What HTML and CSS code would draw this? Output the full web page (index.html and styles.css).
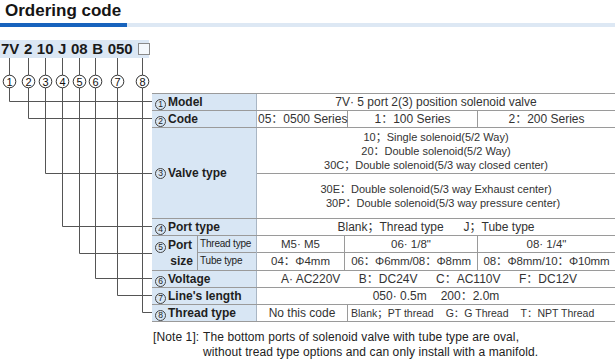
FILE: index.html
```html
<!DOCTYPE html>
<html>
<head>
<meta charset="utf-8">
<link rel="stylesheet" href="styles.css">
</head>
<body>
<div class="page">
  <h1 class="title">Ordering code</h1>
  <div class="rule"><span class="rule-dark"></span><span class="rule-light"></span></div>
  <div class="code">7V 2 10 J 08 B 050<span class="box"></span></div>

  <svg class="links" width="160" height="330" viewBox="0 0 160 330">
    <g fill="none" stroke="#555" stroke-width="1">
      <path d="M9.5 58V75M9.5 88V101.5H152"/>
      <path d="M28.5 58V75M28.5 88V118.5H152"/>
      <path d="M45.5 58V75M45.5 88V173.5H152"/>
      <path d="M62.5 58V75M62.5 88V226.5H152"/>
      <path d="M79.5 58V75M79.5 88V253.5H152"/>
      <path d="M95.5 58V75M95.5 88V278.5H152"/>
      <path d="M117.5 58V75M117.5 88V295.5H152"/>
      <path d="M142.5 58V75M142.5 88V312.5H152"/>
    </g>
    <g fill="#fff" stroke="#333" stroke-width="1">
      <circle cx="9.5" cy="81.5" r="6.3"/>
      <circle cx="28.5" cy="81.5" r="6.3"/>
      <circle cx="45.5" cy="81.5" r="6.3"/>
      <circle cx="62.5" cy="81.5" r="6.3"/>
      <circle cx="79.5" cy="81.5" r="6.3"/>
      <circle cx="95.5" cy="81.5" r="6.3"/>
      <circle cx="117.5" cy="81.5" r="6.3"/>
      <circle cx="142.5" cy="81.5" r="6.3"/>
    </g>
    <g class="cnum" text-anchor="middle">
      <text x="9.5" y="85.5">1</text>
      <text x="28.5" y="85.5">2</text>
      <text x="45.5" y="85.5">3</text>
      <text x="62.5" y="85.5">4</text>
      <text x="79.5" y="85.5">5</text>
      <text x="95.5" y="85.5">6</text>
      <text x="117.5" y="85.5">7</text>
      <text x="142.5" y="85.5">8</text>
    </g>
  </svg>

  <div class="table">
    <div class="row">
      <div class="lab"><span class="n">1</span>Model</div>
      <div class="val">7V· 5 port 2(3) position solenoid valve</div>
    </div>
    <div class="row">
      <div class="lab"><span class="n">2</span>Code</div>
      <div class="cells">
        <div class="cell c1 left">05：0500 Series</div>
        <div class="cell c2">1：100 Series</div>
        <div class="cell c3">2：200 Series</div>
      </div>
    </div>
    <div class="row tall">
      <div class="lab"><span class="n">3</span>Valve type</div>
      <div class="stack">
        <div class="block top">
          <div>10；Single solenoid(5/2 Way)</div>
          <div>20：Double solenoid(5/2 Way)</div>
          <div>30C；Double solenoid(5/3 way closed center)</div>
        </div>
        <div class="block">
          <div>30E：Double solenoid(5/3 way Exhaust center)</div>
          <div class="shift">30P：Double solenoid(5/3 way pressure center)</div>
        </div>
      </div>
    </div>
    <div class="row">
      <div class="lab"><span class="n">4</span>Port type</div>
      <div class="val">Blank；Thread type<span class="gap"></span>J；Tube type</div>
    </div>
    <div class="row double">
      <div class="lab split">
        <div class="pl"><div><span class="n">5</span>Port</div><div class="size">size</div></div>
        <div class="subs">
          <div class="sub">Thread type</div>
          <div class="sub">Tube type</div>
        </div>
      </div>
      <div class="stack size5">
        <div class="cells subrow">
          <div class="cell d1">M5· M5</div>
          <div class="cell d2">06· 1/8"</div>
          <div class="cell d3">08· 1/4"</div>
        </div>
        <div class="cells">
          <div class="cell d1">04：Φ4mm</div>
          <div class="cell d2 tight">06：Φ6mm/08：Φ8mm</div>
          <div class="cell d3 tight">08：Φ8mm/10：Φ10mm</div>
        </div>
      </div>
    </div>
    <div class="row">
      <div class="lab"><span class="n">6</span>Voltage</div>
      <div class="val spread"><span>A· AC220V</span><span>B：DC24V</span><span>C：AC110V</span><span>F：DC12V</span></div>
    </div>
    <div class="row">
      <div class="lab"><span class="n">7</span>Line's length</div>
      <div class="val">050· 0.5m<span class="gap2"></span>200：2.0m</div>
    </div>
    <div class="row">
      <div class="lab"><span class="n">8</span>Thread type</div>
      <div class="cells">
        <div class="cell c1">No this code</div>
        <div class="cell rest small">Blank；PT thread<span class="gap3"></span>G：G Thread<span class="gap3"></span>T：NPT Thread</div>
      </div>
    </div>
  </div>

  <div class="note">
    <div class="note-label">[Note 1]:</div>
    <div class="note-text">The bottom ports of solenoid valve with tube type are oval,<br>without tread type options and can only install with a manifold.</div>
  </div>
</div>
</body>
</html>
```
FILE: styles.css
```css
* { box-sizing: border-box; }
body {
  margin: 0;
  background: #fff;
  font-family: "Liberation Sans", Arial, "Noto Sans CJK SC", sans-serif;
  color: #222;
}
.page {
  position: relative;
  width: 615px;
  height: 364px;
  overflow: hidden;
}
.title {
  margin: 0;
  padding: 1px 0 0 5px;
  height: 23px;
  font-size: 17px;
  line-height: 20px;
  font-weight: bold;
  color: #151515;
}
.rule {
  display: flex;
  height: 4px;
}
.rule-dark { width: 127px; background: #1763bd; }
.rule-light { flex: 1; background: #dde8f4; }

.code {
  margin-top: 13px;
  width: 149px;
  height: 18px;
  padding-left: 1px;
  background: #dbe7f4;
  font-size: 15px;
  font-weight: bold;
  line-height: 18px;
  color: #1a1a1a;
  white-space: nowrap;
  word-spacing: 0.4px;
}
.box {
  display: inline-block;
  width: 12px;
  height: 12px;
  margin-left: 5px;
  border: 1px solid #8a8a8a;
  background: #f4f8fc;
  vertical-align: -1px;
}

.links {
  position: absolute;
  left: 0;
  top: 0;
}
.cnum {
  font-family: "Liberation Sans", Arial, sans-serif;
  font-size: 11px;
  fill: #111;
}

.table {
  margin: 35px 0 0 152px;
  border-top: 1px solid #9a9a9a;
  font-size: 12px;
  color: #333;
}
.row {
  display: flex;
  height: 17px;
  border-bottom: 1px solid #9a9a9a;
}
.row.tall { height: 91px; }
.row.double { height: 35px; }
.lab {
  width: 105px;
  flex: none;
  background: #d8e6f4;
  border-right: 1px solid #a9b6c4;
  padding-left: 3px;
  font-size: 12px;
  font-weight: bold;
  line-height: 16px;
  color: #1e1e1e;
  white-space: nowrap;
}
.row.tall .lab { display: flex; align-items: center; }
.n {
  display: inline-block;
  width: 11px;
  height: 11px;
  margin: 0 2px 0 0;
  border: 1px solid #444;
  border-radius: 50%;
  font-size: 8.5px;
  font-weight: normal;
  line-height: 9px;
  text-align: center;
  vertical-align: -1px;
  color: #222;
}
.val {
  flex: 1;
  text-align: center;
  line-height: 16px;
  white-space: nowrap;
}
.gap { display: inline-block; width: 20px; }
.gap2 { display: inline-block; width: 14px; }
.gap3 { display: inline-block; width: 12px; }
.spread {
  display: flex;
  justify-content: space-between;
  padding: 0 38px 0 24px;
}
.cells {
  flex: 1;
  display: flex;
  line-height: 16px;
  white-space: nowrap;
}
.cell {
  text-align: center;
  border-right: 1px solid #9a9a9a;
}
.cell:last-child { border-right: none; }
.c1 { width: 91px; }
.c2 { width: 130px; }
.c3 { flex: 1; }
.left { text-align: left; padding-left: 1px; }
.rest { flex: 1; text-align: left; padding-left: 3px; }
.small { font-size: 10.5px; }
.stack {
  flex: 1;
  display: flex;
  flex-direction: column;
}
.block {
  height: 44px;
  display: flex;
  flex-direction: column;
  justify-content: center;
  align-items: center;
  font-size: 11px;
  line-height: 14px;
  white-space: nowrap;
}
.block.top {
  height: 46px;
  border-bottom: 1px solid #9a9a9a;
}
.shift { padding-left: 14px; }
.size5 { font-size: 11.5px; }
.subrow {
  flex: none;
  height: 17px;
  border-bottom: 1px solid #9a9a9a;
}
.d1 { width: 88px; }
.d2 { width: 133px; }
.d3 { flex: 1; }
.tight { letter-spacing: -0.1px; }
.split {
  display: flex;
  padding-left: 0;
}
.pl {
  width: 45px;
  padding-left: 3px;
  padding-top: 1px;
}
.size { text-align: right; padding-right: 4px; }
.subs {
  flex: 1;
  border-left: 1px solid #9a9a9a;
  display: flex;
  flex-direction: column;
}
.sub {
  height: 17px;
  font-size: 10px;
  letter-spacing: -0.2px;
  font-weight: normal;
  color: #222;
  padding-left: 2px;
  line-height: 16px;
}
.sub:first-child { border-bottom: 1px solid #9a9a9a; }

.note {
  display: flex;
  margin: 8px 0 0 153px;
  font-size: 12px;
  line-height: 15px;
  letter-spacing: 0.1px;
  color: #222;
}
.note-label { width: 50px; flex: none; }
.note-text { white-space: nowrap; }
```
